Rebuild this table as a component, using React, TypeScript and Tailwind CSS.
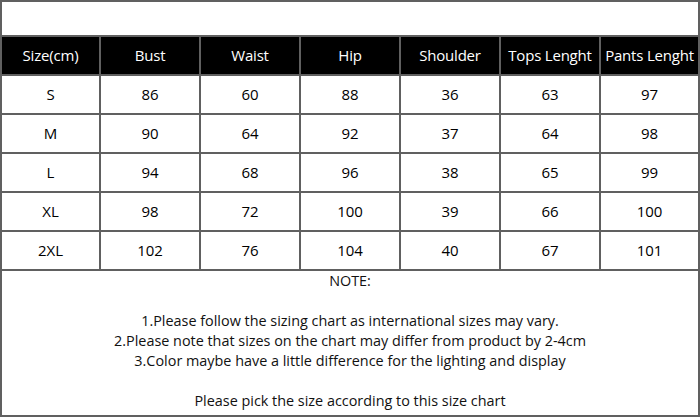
const headers = ['Size(cm)', 'Bust', 'Waist', 'Hip', 'Shoulder', 'Tops Lenght', 'Pants Lenght'];

const rows = [
  ['S', '86', '60', '88', '36', '63', '97'],
  ['M', '90', '64', '92', '37', '64', '98'],
  ['L', '94', '68', '96', '38', '65', '99'],
  ['XL', '98', '72', '100', '39', '66', '100'],
  ['2XL', '102', '76', '104', '40', '67', '101'],
];

export default function App() {
  return (
    <div
      className="w-[700px] h-[417px] bg-[#606060] p-[2px] grid grid-cols-[97px_98px_98px_98px_98px_98px_97px] grid-rows-[33px_37px_37px_37px_37px_37px_37px_144px] gap-[2px] text-[15px] text-black"
      style={{ fontFamily: '"Open Sans", "Noto Sans", sans-serif' }}
    >
      <div className="col-span-7 bg-white" />
      {headers.map((h) => (
        <div key={h} className="bg-black text-white flex items-center justify-center whitespace-nowrap tracking-[-0.2px]">
          {h}
        </div>
      ))}
      {rows.map((r) =>
        r.map((c, i) => (
          <div key={r[0] + i} className="bg-white flex items-center justify-center">
            {c}
          </div>
        ))
      )}
      <div className="col-span-7 bg-white text-center leading-[20px] text-[14.4px] text-[#111]">
        <p>NOTE:</p>
        <p>&nbsp;</p>
        <p>1.Please follow the sizing chart as international sizes may vary.</p>
        <p>2.Please note that sizes on the chart may differ from product by 2-4cm</p>
        <p>3.Color maybe have a little difference for the lighting and display</p>
        <p>&nbsp;</p>
        <p>Please pick the size according to this size chart</p>
      </div>
    </div>
  );
}
